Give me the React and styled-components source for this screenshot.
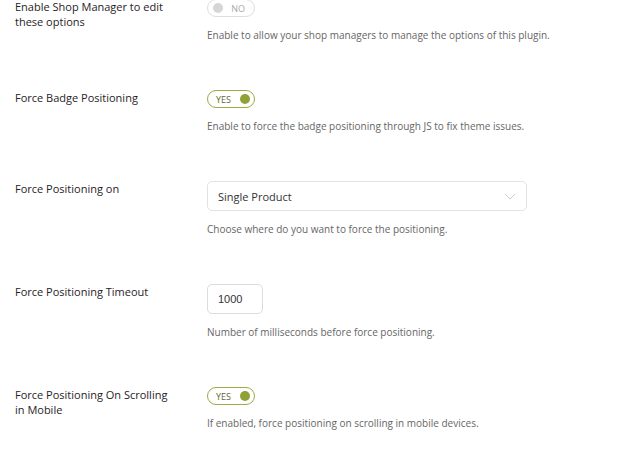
import React from 'react';
import styled, { createGlobalStyle } from 'styled-components';

const GlobalStyle = createGlobalStyle`
  body {
    margin: 0;
    background: #ffffff;
    font-family: "Open Sans", "Noto Sans", sans-serif;
  }
`;

const Page = styled.div`
  width: 644px;
  height: 452px;
  overflow: hidden;
  background: #ffffff;
  margin-top: -1px;
`;

const Row = styled.div`
  display: grid;
  grid-template-columns: 192px 1fr;
  padding: 0 0 48px 15px;
`;

const Label = styled.div`
  font-size: 11px;
  line-height: 15px;
  font-weight: 500;
  color: #1f2326;
  padding-right: 34px;
`;

const Field = styled.div`
  display: flex;
  flex-direction: column;
  align-items: flex-start;
`;

const Description = styled.div`
  margin-top: 11px;
  font-size: 10px;
  line-height: 14px;
  color: #666666;
`;

const Toggle = styled.div`
  box-sizing: border-box;
  width: 48px;
  height: 18px;
  border-radius: 9px;
  border: 1px solid ${(p) => (p.$on ? '#9aab45' : '#dedede')};
  display: flex;
  align-items: center;
  flex-direction: ${(p) => (p.$on ? 'row' : 'row-reverse')};
  justify-content: space-between;
  padding: ${(p) => (p.$on ? '0 4px 0 8px' : '0 9px 0 5px')};
  font-size: 9px;
  color: ${(p) => (p.$on ? '#5f6a33' : '#a8a8a8')};
`;

const Knob = styled.span`
  width: 10px;
  height: 10px;
  border-radius: 50%;
  background: ${(p) => (p.$on ? '#8ea236' : '#d6d6d6')};
`;

const Select = styled.div`
  box-sizing: border-box;
  width: 320px;
  height: 30px;
  border: 1px solid #e2e2e2;
  border-radius: 5px;
  display: flex;
  align-items: center;
  justify-content: space-between;
  padding: 0 10px 0 10px;
  font-size: 11px;
  color: #333333;
`;

const NumberBox = styled.div`
  box-sizing: border-box;
  width: 56px;
  height: 30px;
  border: 1px solid #dcdcdc;
  border-radius: 5px;
  display: flex;
  align-items: center;
  padding-left: 10px;
  font-family: "Liberation Sans", Arial, sans-serif;
  font-size: 11px;
  color: #333333;
`;

const Chevron = () => (
  <svg width="12" height="7" viewBox="0 0 12 7" fill="none">
    <path d="M1 1l5 5 5-5" stroke="#cfcfcf" strokeWidth="1" />
  </svg>
);

const SwitchControl = ({ on }) => (
  <Toggle $on={on}>
    <span>{on ? 'YES' : 'NO'}</span>
    <Knob $on={on} />
  </Toggle>
);

export default function App() {
  return (
    <>
      <GlobalStyle />
      <Page>
        <Row>
          <Label>Enable Shop Manager to edit these options</Label>
          <Field>
            <SwitchControl on={false} />
            <Description>Enable to allow your shop managers to manage the options of this plugin.</Description>
          </Field>
        </Row>
        <Row>
          <Label>Force Badge Positioning</Label>
          <Field>
            <SwitchControl on />
            <Description>Enable to force the badge positioning through JS to fix theme issues.</Description>
          </Field>
        </Row>
        <Row>
          <Label>Force Positioning on</Label>
          <Field>
            <Select>
              <span>Single Product</span>
              <Chevron />
            </Select>
            <Description>Choose where do you want to force the positioning.</Description>
          </Field>
        </Row>
        <Row>
          <Label>Force Positioning Timeout</Label>
          <Field>
            <NumberBox>1000</NumberBox>
            <Description>Number of milliseconds before force positioning.</Description>
          </Field>
        </Row>
        <Row>
          <Label>Force Positioning On Scrolling in Mobile</Label>
          <Field>
            <SwitchControl on />
            <Description>If enabled, force positioning on scrolling in mobile devices.</Description>
          </Field>
        </Row>
      </Page>
    </>
  );
}
